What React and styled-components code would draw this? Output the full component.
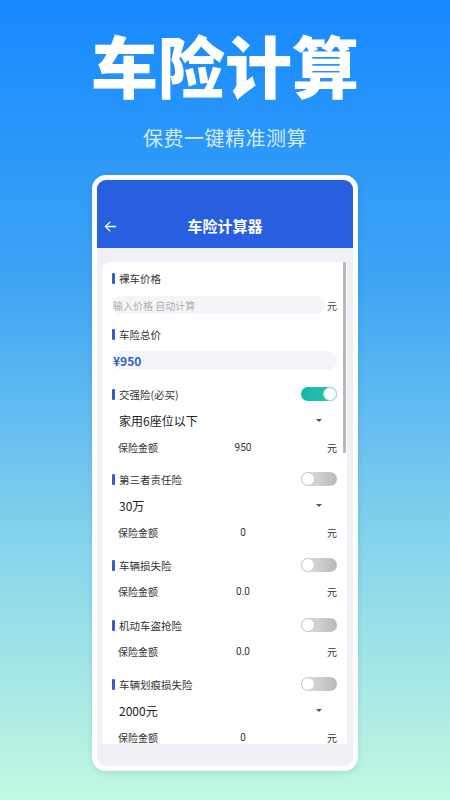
import React from "react";
import styled, { createGlobalStyle } from "styled-components";

const GlobalStyle = createGlobalStyle`
  html, body {
    margin: 0;
    padding: 0;
  }
  body {
    font-family: "Noto Sans CJK SC", "Noto Sans", sans-serif;
    color: #333;
  }
`;

const Page = styled.div`
  width: 450px;
  height: 800px;
  overflow: hidden;
  background: linear-gradient(180deg, #1689ff 0%, #3ea4f4 35%, #86d4ec 68%, #c2f9e0 100%);
  display: flex;
  flex-direction: column;
  align-items: center;
`;

const Hero = styled.h1`
  margin: 15px 0 0;
  font-size: 67px;
  line-height: 98px;
  font-weight: 900;
  color: #fff;
  letter-spacing: 0;
`;

const Slogan = styled.p`
  margin: 11px 0 0;
  font-size: 20px;
  line-height: 28px;
  color: rgba(235, 247, 255, 0.9);
  letter-spacing: 0.5px;
`;

const Frame = styled.div`
  margin-top: 23px;
  width: 256px;
  height: 586px;
  border: 5px solid #fff;
  border-radius: 14px;
  overflow: hidden;
  display: flex;
  flex-direction: column;
  background: #eff1f6;
  box-shadow: 0 2px 6px rgba(0, 60, 140, 0.12);
`;

const Header = styled.div`
  height: 68px;
  padding-top: 24px;
  box-sizing: border-box;
  background: #275fe0;
  display: flex;
  align-items: center;
  position: relative;
  justify-content: center;
`;

const Back = styled.button`
  position: absolute;
  left: 6px;
  top: 39px;
  border: 0;
  background: none;
  padding: 0;
  display: flex;
  color: #fff;
`;

const HeaderTitle = styled.div`
  color: #fff;
  font-size: 15px;
  font-weight: 700;
  margin-top: -2px;
`;

const Body = styled.div`
  flex: 1;
  min-height: 0;
  padding: 14px 6px 22px 5px;
  display: flex;
  flex-direction: column;
`;

const Viewport = styled.div`
  flex: 1;
  min-height: 0;
  overflow: hidden;
  position: relative;
`;

const ScrollBar = styled.div`
  position: absolute;
  right: 1px;
  top: 0;
  width: 3px;
  height: 191px;
  background: #b9b9b9;
  border-radius: 1px;
`;

const Card = styled.div`
  background: #fff;
  border-radius: 8px;
  padding: 3px 10px 20px;
`;

const LabelRow = styled.div`
  height: 26px;
  display: flex;
  align-items: center;
  justify-content: space-between;
  margin-top: ${(p) => p.$gap || 0}px;
`;

const Label = styled.div`
  display: flex;
  align-items: center;
  font-size: 10.5px;
  color: #333;
  &::before {
    content: "";
    width: 3px;
    height: 11px;
    background: #2f5fd3;
    border-radius: 1px;
    margin-right: 4px;
  }
`;

const InputRow = styled.div`
  display: flex;
  align-items: center;
  margin-top: ${(p) => p.$gap}px;
`;

const Pill = styled.div`
  flex: 1;
  height: ${(p) => p.$h}px;
  border-radius: 10px;
  background: #f4f5f9;
  display: flex;
  align-items: center;
  padding-left: 1px;
  font-size: ${(p) => (p.$value ? "12px" : "10px")};
  font-weight: ${(p) => (p.$value ? 700 : 400)};
  color: ${(p) => (p.$value ? "#2d62cf" : "#b0b0b0")};
`;

const Unit = styled.span`
  font-size: 10px;
  color: #444;
  margin-left: 2px;
`;

const Toggle = styled.div`
  width: 36px;
  height: 14px;
  border-radius: 7px;
  box-sizing: border-box;
  display: flex;
  justify-content: ${(p) => (p.$on ? "flex-end" : "flex-start")};
  background: ${(p) =>
    p.$on
      ? "linear-gradient(90deg, #17b7a4, #23c7b9)"
      : "linear-gradient(90deg, #e4e4e4, #b9b9b9)"};
  &::after {
    content: "";
    width: 14px;
    height: 14px;
    border-radius: 50%;
    box-sizing: border-box;
    background: #fff;
    border: 1px solid ${(p) => (p.$on ? "#9fdcd4" : "#c8c8c8")};
  }
`;

const Select = styled.div`
  height: 27px;
  display: flex;
  align-items: center;
  justify-content: space-between;
  padding: 0 15px 0 7px;
  font-size: 12px;
  color: #222;
`;

const Caret = styled.span`
  width: 0;
  height: 0;
  border-left: 3px solid transparent;
  border-right: 3px solid transparent;
  border-top: 3px solid #555;
`;

const Amount = styled.div`
  height: 27px;
  display: grid;
  grid-template-columns: 100px 50px 1fr;
  align-items: center;
  padding-left: 6px;
  font-size: 10px;
  color: #333;
`;

const AmountValue = styled.span`
  text-align: center;
  font-family: "Roboto", "Noto Sans", sans-serif;
`;

const AmountUnit = styled.span`
  text-align: right;
`;

const sections = [
  { name: "交强险(必买)", on: true, select: "家用6座位以下", value: "950", gap: 11 },
  { name: "第三者责任险", on: false, select: "30万", value: "0", gap: 5 },
  { name: "车辆损失险", on: false, value: "0.0", gap: 6 },
  { name: "机动车盗抢险", on: false, value: "0.0", gap: 7 },
  { name: "车辆划痕损失险", on: false, select: "2000元", value: "0", gap: 6 },
];

const ArrowLeft = () => (
  <svg width="15" height="15" viewBox="0 0 24 24" fill="none" stroke="currentColor" strokeWidth="2.2" strokeLinecap="round" strokeLinejoin="round">
    <path d="M20 12H4" />
    <path d="M11 5l-7 7 7 7" />
  </svg>
);

export default function App() {
  return (
    <Page>
      <GlobalStyle />
      <Hero>车险计算</Hero>
      <Slogan>保费一键精准测算</Slogan>
      <Frame>
        <Header>
          <Back aria-label="返回">
            <ArrowLeft />
          </Back>
          <HeaderTitle>车险计算器</HeaderTitle>
        </Header>
        <Body>
          <Viewport>
            <Card>
              <LabelRow>
                <Label>裸车价格</Label>
              </LabelRow>
              <InputRow $gap={5}>
                <Pill $h={18}>输入价格 自动计算</Pill>
                <Unit>元</Unit>
              </InputRow>
              <LabelRow $gap={7}>
                <Label>车险总价</Label>
              </LabelRow>
              <InputRow $gap={4}>
                <Pill $h={19} $value>¥950</Pill>
              </InputRow>
              {sections.map((s) => (
                <React.Fragment key={s.name}>
                  <LabelRow $gap={s.gap}>
                    <Label>{s.name}</Label>
                    <Toggle $on={s.on} />
                  </LabelRow>
                  {s.select && (
                    <Select>
                      {s.select}
                      <Caret />
                    </Select>
                  )}
                  <Amount>
                    <span>保险金额</span>
                    <AmountValue>{s.value}</AmountValue>
                    <AmountUnit>元</AmountUnit>
                  </Amount>
                </React.Fragment>
              ))}
            </Card>
            <ScrollBar />
          </Viewport>
        </Body>
      </Frame>
    </Page>
  );
}
